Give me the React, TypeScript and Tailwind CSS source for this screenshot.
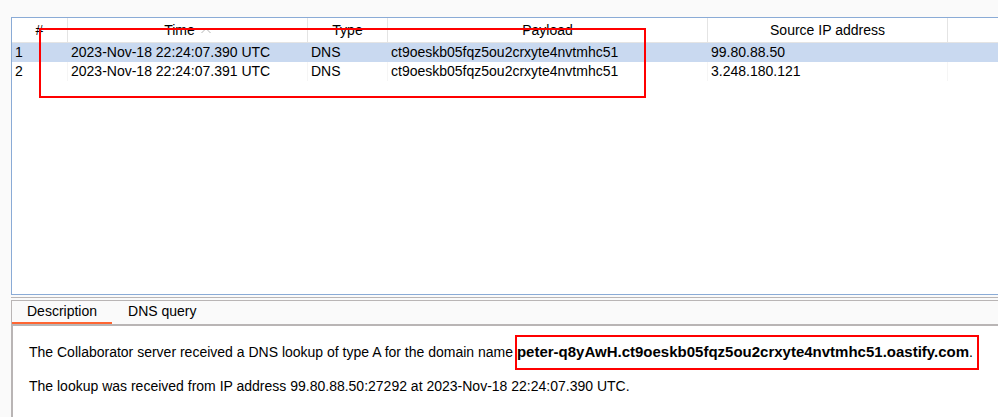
type Interaction = {
  id: number;
  time: string;
  type: string;
  payload: string;
  source: string;
};

const interactions: Interaction[] = [
  { id: 1, time: "2023-Nov-18 22:24:07.390 UTC", type: "DNS", payload: "ct9oeskb05fqz5ou2crxyte4nvtmhc51", source: "99.80.88.50" },
  { id: 2, time: "2023-Nov-18 22:24:07.391 UTC", type: "DNS", payload: "ct9oeskb05fqz5ou2crxyte4nvtmhc51", source: "3.248.180.121" },
];

const headCell = "border-r border-b border-[#e4e4e4] p-0 font-normal";

function InteractionTable() {
  return (
    <section className="relative h-[278px] border border-r-0 border-[#8aabd6] bg-white">
      <table className="w-full table-fixed border-separate border-spacing-0">
        <colgroup>
          <col className="w-14" />
          <col className="w-60" />
          <col className="w-20" />
          <col className="w-80" />
          <col className="w-60" />
          <col />
        </colgroup>
        <thead>
          <tr className="h-[25px]">
            <th className={headCell}>#</th>
            <th className={headCell} aria-sort="ascending">
              <span className="inline-flex items-center gap-[6px]">
                Time
                <svg width="10" height="7" viewBox="0 0 10 7" fill="none" stroke="#b4b4b4" aria-hidden="true">
                  <path d="M0.5 6L5 1.5L9.5 6" />
                </svg>
              </span>
            </th>
            <th className={headCell}>Type</th>
            <th className={headCell}>Payload</th>
            <th className={headCell}>Source IP address</th>
            <td className="border-b border-[#e4e4e4] p-0" />
          </tr>
        </thead>
        <tbody>
          {interactions.map((row, i) => {
            const cell = `border-r px-[3px] pt-0 pb-[2px] ${i === 0 ? "border-[#c9d9f0]" : "border-[#f5f5f5]"}`;
            return (
              <tr key={row.id} className={`h-[19px] ${i === 0 ? "bg-[#c9d9f0]" : ""}`}>
                <td className={cell}>{row.id}</td>
                <td className={cell}>{row.time}</td>
                <td className={cell}>{row.type}</td>
                <td className={cell}>{row.payload}</td>
                <td className={cell}>{row.source}</td>
                <td className="p-0" />
              </tr>
            );
          })}
        </tbody>
      </table>
      <div className="pointer-events-none absolute top-[10px] left-[27px] h-[70px] w-[607px] border-2 border-[#ff0000]" />
    </section>
  );
}

function Details() {
  return (
    <section className="flex grow flex-col border-t border-l border-[#b9b5b5]">
      <div role="tablist" className="flex h-[23px]">
        <button type="button" role="tab" aria-selected="true" className="border-b-2 border-[#ff6633] px-[15px] pb-[2px]">
          Description
        </button>
        <button type="button" role="tab" aria-selected="false" className="border-b-2 border-transparent px-4 pb-[2px]">
          DNS query
        </button>
      </div>
      <div role="tabpanel" className="relative flex grow flex-col gap-[18px] border-t-2 border-l border-[#b9b5b5] bg-white px-4 pt-[18px]">
        <p>
          The Collaborator server received a DNS lookup of type A for the domain name{" "}
          <b className="text-[15px] leading-4">peter-q8yAwH.ct9oeskb05fqz5ou2crxyte4nvtmhc51.oastify.com</b>.
        </p>
        <p>The lookup was received from IP address 99.80.88.50:27292 at 2023-Nov-18 22:24:07.390 UTC.</p>
        <div className="pointer-events-none absolute top-[9px] left-[502px] h-[35px] w-[464px] border-2 border-[#ff0000]" />
      </div>
    </section>
  );
}

export default function App() {
  return (
    <main className="flex min-h-screen flex-col bg-[#fafafa] pt-[17px] pl-[11px] font-['Liberation_Sans',Arial,sans-serif] text-[14px] leading-4 text-black">
      <InteractionTable />
      <div className="mt-[2px] mb-[2px] h-px bg-[#b9b5b5]" />
      <Details />
    </main>
  );
}
